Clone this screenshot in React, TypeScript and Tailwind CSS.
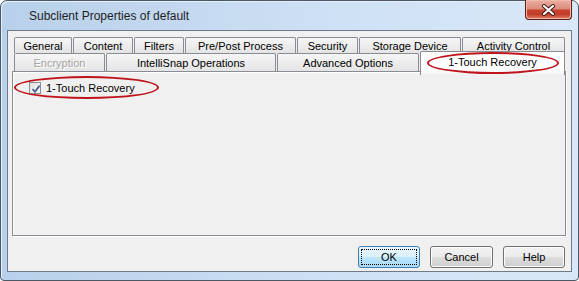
const font = "font-['Liberation_Sans',Arial,sans-serif]";

// ============================================
// Tab Component
// ============================================

interface TabProps {
  label: string;
  width: string;
  gap?: string;
  disabled?: boolean;
}

const Tab = ({ label, width, gap = "ml-px", disabled }: TabProps) => (
  <div
    className={`${width} ${gap} h-full flex items-center justify-center pt-px border border-b-0 border-[#898c95] rounded-t-[2px] bg-[linear-gradient(#f6f6f6,#e4e4e4)] text-[11px] leading-none whitespace-nowrap ${
      disabled ? "text-[#a3a3a3] [text-shadow:1px_1px_0_#ffffff]" : "text-black"
    }`}
  >
    {label}
  </div>
);

// ============================================
// Dialog Button
// ============================================

interface ButtonProps {
  label: string;
  width: string;
  isDefault?: boolean;
}

const DialogButton = ({ label, width, isDefault }: ButtonProps) =>
  isDefault ? (
    <div className={`${width} h-[22px] p-[2px] rounded-[3px] border border-[#3c7fb1] bg-[linear-gradient(#eaf6fd_0%,#d9f0fc_50%,#bee6fd_51%,#a7d9f5_100%)]`}>
      <div className="h-full flex items-center justify-center border border-dotted border-black text-[11px] text-black leading-none">
        {label}
      </div>
    </div>
  ) : (
    <div
      className={`${width} h-[22px] flex items-center justify-center rounded-[3px] border border-[#707070] bg-[linear-gradient(#f2f2f2_0%,#ebebeb_50%,#dddddd_51%,#cfcfcf_100%)] shadow-[inset_0_0_0_1px_#fcfcfc] text-[11px] text-black leading-none`}
    >
      {label}
    </div>
  );

// ============================================
// Main Component
// ============================================

export default function App() {
  return (
    <div className={`relative w-[579px] h-[281px] bg-white ${font}`}>
      <div className="w-[579px] h-[281px] flex flex-col rounded-t-[7px] rounded-b-[4px] border border-[#4d5865] bg-[linear-gradient(90deg,#b8d0ea,#cfe1f5_60%,#d9e8f8)] px-[6px] pb-[8px] shadow-[inset_1px_1px_0_#e6f0fb]">
        {/* Title bar */}
        <div className="h-[29px] flex items-start shrink-0">
          <span className="pl-[22px] pt-[7px] text-[12px] leading-[16px] text-[#1e1e1e]">Subclient Properties of default</span>
          <div className="ml-auto -mt-px w-[47px] h-[20px] flex items-center justify-center rounded-b-[4px] border border-t-0 border-[#5a1e16] bg-[linear-gradient(#eab0a3_0%,#dc8c7c_45%,#c7432f_55%,#c23b27_75%,#e0806a_100%)] shadow-[inset_0_0_0_1px_#f0b8ab]">
            <svg width="15" height="12" viewBox="0 0 15 12">
              <path d="M3 2 L12 10 M12 2 L3 10" stroke="#3a1610" strokeWidth="4" strokeLinecap="round" />
              <path d="M3 2 L12 10 M12 2 L3 10" stroke="#ffffff" strokeWidth="2.2" strokeLinecap="round" />
            </svg>
          </div>
        </div>

        {/* Client area */}
        <div className="flex-1 flex flex-col border border-[#6f7b89] bg-[#f0f0f0] pt-[6px] pl-[4px]">
          {/* Back tab row */}
          <div className="h-[16px] flex pl-[2px]">
            <Tab label="General" width="w-[58px]" gap="ml-0" />
            <Tab label="Content" width="w-[60px]" />
            <Tab label="Filters" width="w-[50px]" />
            <Tab label="Pre/Post Process" width="w-[111px]" />
            <Tab label="Security" width="w-[61px]" />
            <Tab label="Storage Device" width="w-[102px]" />
            <Tab label="Activity Control" width="w-[103px]" />
          </div>

          {/* Front tab row */}
          <div className="h-[18px] flex items-start pl-[2px]">
            <Tab label="Encryption" width="w-[91px]" gap="ml-0" disabled />
            <Tab label="IntelliSnap Operations" width="w-[170px]" gap="ml-[1px]" />
            <Tab label="Advanced Options" width="w-[142px]" gap="ml-[1px]" />
            <div className="relative z-10 ml-px -mt-[2px] w-[145px] h-[24px] flex justify-center pt-[5px] border border-b-0 border-[#898c95] rounded-t-[2px] bg-[linear-gradient(#ffffff_80%,#f0f0f0)] text-[11px] leading-none text-black whitespace-nowrap">
              1-Touch Recovery
            </div>
          </div>

          {/* Tab content */}
          <div className="w-[554px] h-[165px] border border-[#898c95] shadow-[1px_1px_0_#ffffff,inset_1px_1px_0_#ffffff] pt-[9px] pl-[16px]">
            <div className="flex items-center gap-[5px]">
              <div className="w-[12px] h-[12px] border border-[#8e8f8f] bg-[linear-gradient(135deg,#dcdcdc,#ffffff)] p-px">
                <svg width="10" height="10" viewBox="0 0 10 10" className="block">
                  <path d="M1.5 5 L4 7.8 L8.6 1.6" stroke="#4a5f97" strokeWidth="1.8" fill="none" />
                </svg>
              </div>
              <span className="text-[11px] leading-[14px] text-black">1-Touch Recovery</span>
            </div>
          </div>

          {/* Buttons */}
          <div className="w-[554px] mt-[10px] flex justify-end gap-[10px] pr-px">
            <DialogButton label="OK" width="w-[62px]" isDefault />
            <DialogButton label="Cancel" width="w-[63px]" />
            <DialogButton label="Help" width="w-[62px]" />
          </div>
        </div>
      </div>

      {/* Red callout ellipses */}
      <div className="absolute left-[14px] top-[76px] w-[145px] h-[23px] rounded-[50%] border-2 border-[#c0141c]" />
      <div className="absolute left-[427px] top-[52px] w-[132px] h-[22px] rounded-[50%] border-2 border-[#c0141c] z-20" />
    </div>
  );
}
